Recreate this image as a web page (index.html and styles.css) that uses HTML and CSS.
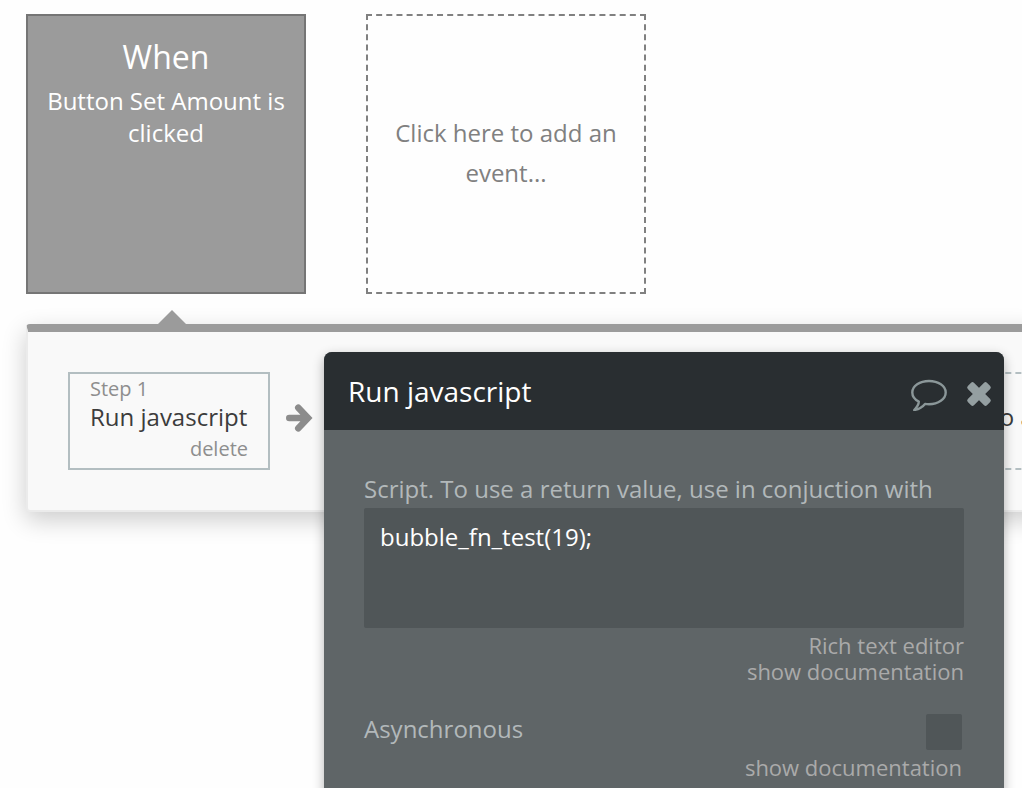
FILE: index.html
```html
<!doctype html>
<html>
<head>
  <meta charset="utf-8">
  <title>Workflow</title>
  <link rel="stylesheet" href="styles.css">
</head>

<body>
  <div class="events">
    <button class="event selected">
      <span class="event-title">When</span>
      <span class="event-name">Button Set Amount is clicked</span>
    </button>
    <button class="event add-event">Click here to add an event...</button>
  </div>

  <div class="workflow">
    <div class="pointer"></div>
    <div class="steps">
      <div class="step">
        <span class="step-num">Step 1</span>
        <span class="step-name">Run javascript</span>
        <a href="#" class="step-delete">delete</a>
      </div>
      <svg class="arrow" width="28" height="30" viewBox="0 0 28 30">
        <path d="M3.300 15H21M12.300 4.700L22 15L12.300 25.300" fill="none" stroke="#8c8c8c" stroke-width="6.600" stroke-linecap="round"/>
      </svg>
      <button class="step add-step">Click here to add an action...</button>
    </div>

    <div class="popup">
      <div class="popup-header">
        <h1>Run javascript</h1>
        <button class="icon" aria-label="Comment">
          <svg width="38" height="34" viewBox="0 0 38 34">
            <path d="M19 4C28.300 4 35.700 9 35.700 15.500S28.300 27.200 19 27.200C17.600 27.200 16.200 27.100 15 26.900C12.300 30.200 9 32.300 4.200 33C6.800 30.500 8.800 27.800 8.800 24.600C4.700 22.500 2.300 19 2.300 15.500C2.300 9 9.700 4 19 4Z" fill="none" stroke="#8b9799" stroke-width="2.400" stroke-linejoin="round"/>
          </svg>
        </button>
        <button class="icon" aria-label="Close">
          <svg width="26" height="26" viewBox="0 0 26 26">
            <g fill="#949fa1">
              <rect x="-0.500" y="8.700" width="27" height="8.600" rx="2" transform="rotate(45 13 13)"/>
              <rect x="-0.500" y="8.700" width="27" height="8.600" rx="2" transform="rotate(-45 13 13)"/>
            </g>
          </svg>
        </button>
      </div>
      <div class="popup-body">
        <label for="script">Script. To use a return value, use in conjuction with</label>
        <textarea id="script" spellcheck="false">bubble_fn_test(19);</textarea>
        <div class="links">
          <a href="#">Rich text editor</a>
          <a href="#">show documentation</a>
        </div>
        <div class="check-row">
          <label for="async">Asynchronous</label>
          <input type="checkbox" id="async">
        </div>
        <div class="links check-links">
          <a href="#">show documentation</a>
        </div>
      </div>
    </div>
  </div>
</body>

</html>
```

FILE: styles.css
```css
* {
  box-sizing: border-box;
}
html {
  height: 100%;
  overflow: hidden;
}
body {
  margin: 0;
  min-height: 100%;
  padding: 14px 0 0 26px;
  background: #fefefe;
  font-family: "Open Sans", "Noto Sans", sans-serif;
  font-size: 24px;
}
button {
  font: inherit;
  cursor: pointer;
}
a {
  text-decoration: none;
}

/* events */
.events {
  display: flex;
  gap: 60px;
}
.event {
  width: 280px;
  height: 280px;
  padding: 20px 16px 22px;
  text-align: center;
}
.selected {
  display: flex;
  flex-direction: column;
  justify-content: flex-start;
  background: #9b9b9b;
  border: 2px solid #757575;
  color: #fff;
}
.event-title {
  font-size: 32px;
  line-height: 42px;
  margin-bottom: 7px;
}
.event-name {
  line-height: 32px;
}
.add-event {
  background: none;
  border: 2px dashed #808080;
  color: #808080;
  line-height: 40px;
}

/* workflow panel */
.workflow {
  position: relative;
  margin: 30px -20px 0 0;
  padding: 40px;
  background: #f9f9f9;
  border: 2px solid #ebebeb;
  border-top: 8px solid #9b9b9b;
  border-radius: 4px;
  box-shadow: 0 8px 24px rgba(0, 0, 0, 0.2);
}
.pointer {
  position: absolute;
  top: -22px;
  left: 130px;
  border: 14px solid transparent;
  border-top: none;
  border-bottom-color: #9b9b9b;
}
.steps {
  display: grid;
  grid-template-columns: 202px 60px 202px 60px 202px 60px max-content;
  align-items: center;
}
.step {
  display: flex;
  flex-direction: column;
  height: 98px;
  padding: 0 20px;
  border: 2px solid #b3bec1;
  color: #3c3c3c;
}
.step-num {
  font-size: 20px;
  line-height: 30px;
  color: #8e8e8e;
}
.step-name {
  line-height: 26px;
  white-space: nowrap;
}
.step-delete {
  font-size: 20px;
  line-height: 38px;
  text-align: right;
  color: #8e8e8e;
}
.arrow {
  margin-left: 16px;
  margin-bottom: 6px;
}
.add-step {
  grid-column: 7;
  justify-content: center;
  padding-bottom: 10px;
  background: none;
  border-style: dashed;
  white-space: nowrap;
}

/* property popup */
.popup {
  position: absolute;
  top: 20px;
  left: 296px;
  width: 680px;
  border-radius: 8px 8px 0 0;
  overflow: hidden;
  background: #5f6567;
  box-shadow: 0 4px 12px rgba(0, 0, 0, 0.3);
}
.popup-header {
  display: flex;
  align-items: center;
  gap: 18px;
  height: 78px;
  padding: 0 12px 0 24px;
  background: #292e31;
}
.popup-header h1 {
  flex: 1;
  margin: 0;
  font-size: 28px;
  font-weight: normal;
  color: #fff;
}
.icon {
  display: flex;
  padding: 6px 0 0;
  border: none;
  background: none;
}
.popup-body {
  padding: 40px 40px 80px;
  color: #b2b8ba;
}
.popup-body label {
  display: block;
  line-height: 38px;
}
.popup-body textarea {
  display: block;
  width: 100%;
  height: 120px;
  padding: 12px 16px;
  border: none;
  border-radius: 2px;
  outline: none;
  resize: none;
  background: #505658;
  color: #fff;
  font: inherit;
  line-height: 34px;
}
.links {
  display: flex;
  flex-direction: column;
  align-items: flex-end;
  padding-top: 4px;
}
.links a {
  font-size: 22px;
  line-height: 26px;
  color: #aaa;
}
.check-row {
  display: flex;
  justify-content: space-between;
  margin-top: 28px;
  padding-right: 2px;
}
.popup-body .check-row label {
  line-height: 34px;
}
.check-row input {
  appearance: none;
  width: 36px;
  height: 36px;
  margin: 2px 0 0;
  border-radius: 2px;
  background: #505658;
}
.check-links {
  padding-right: 2px;
}
```
